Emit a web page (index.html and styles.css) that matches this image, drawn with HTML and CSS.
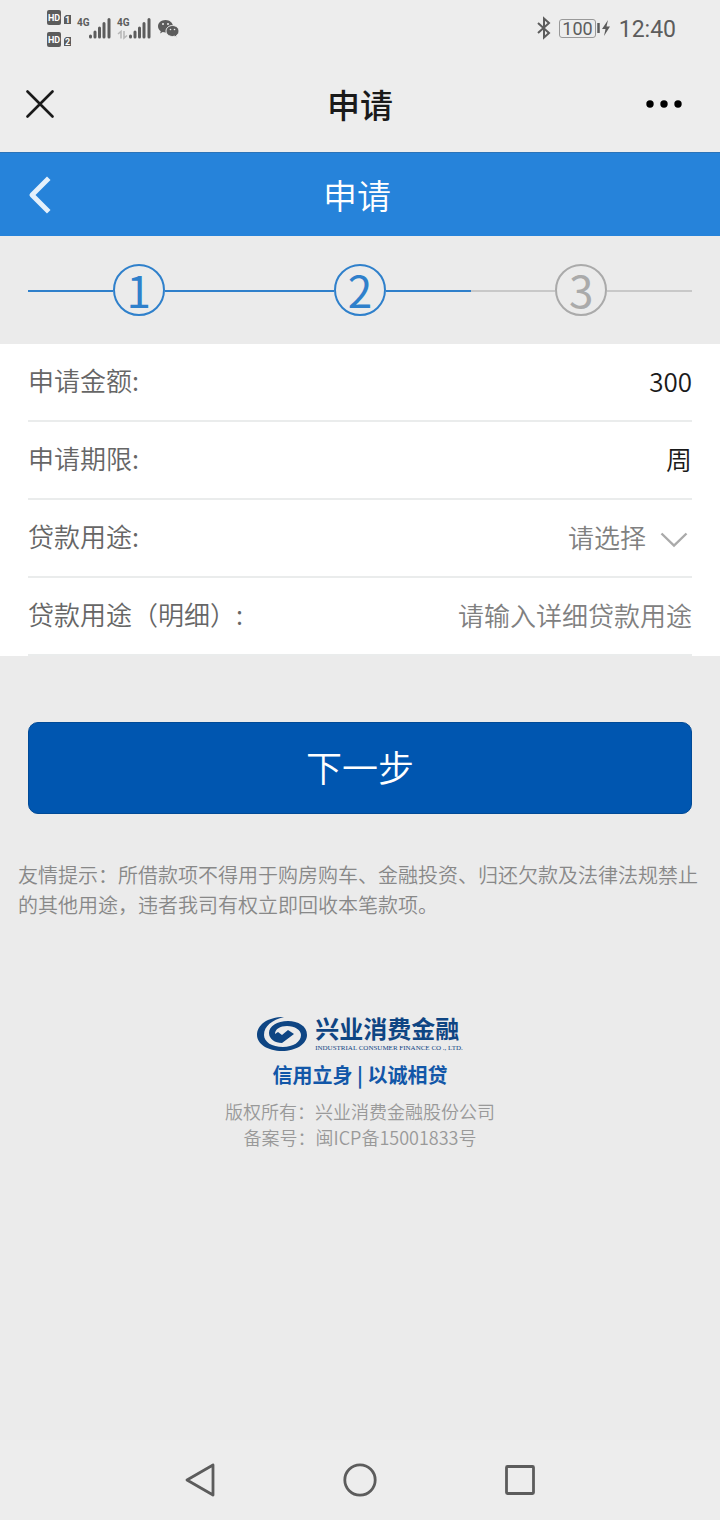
FILE: index.html
```html
<!DOCTYPE html>
<html lang="zh-CN">
<head>
<meta charset="utf-8">
<meta name="viewport" content="width=device-width, initial-scale=1">
<title>申请</title>
<link rel="stylesheet" href="styles.css">
</head>
<body>
<div class="statusbar">
  <div class="status-group">
    <svg class="icon" width="136" height="40" viewBox="0 -1 136 40" role="img" aria-label="信号">
      <g fill="#5c5c5c">
        <rect x="1" y="1" width="14" height="15" rx="2"/>
        <path d="M20 6h5v9h-7V8z"/>
        <rect x="1" y="23" width="14" height="15" rx="2"/>
        <path d="M20 28h5v9h-7v-7z"/>
      </g>
      <g class="hd-text">
        <text x="2" y="12">HD</text>
        <text x="19" y="14">1</text>
        <text x="2" y="34">HD</text>
        <text x="19" y="36">2</text>
      </g>
      <g class="net-text">
        <text x="31" y="17">4G</text>
        <text x="71" y="17">4G</text>
      </g>
      <g stroke="#5c5c5c" stroke-width="3" stroke-linecap="round">
        <path d="M44.500 27v1M49 23v5M53.500 19v9M58 14.500v13.500M63 10.500v17.500"/>
        <path d="M84.500 27v1M89 23v5M93.500 19v9M98 14.500v13.500M103 10.500v17.500"/>
      </g>
      <path d="M72 25l3-2.500v7M78 22v7l3-2.500" fill="none" stroke="#b8b8b8" stroke-width="1.600"/>
      <g fill="#5c5c5c">
        <path d="M119.500 11c-4.200 0-7.500 2.800-7.500 6.300 0 2 1 3.700 2.800 4.900l-.7 2.200 2.600-1.300 2.800.5c6 0 7.500-3 7.500-6.300s-3.300-6.300-7.500-6.300z"/>
        <path d="M126.500 16.500c-3.700 0-6.500 2.500-6.500 5.500s2.800 5.500 6.500 5.500l2.200-.3 2.300 1.200-.5-2c1.600-1 2.500-2.600 2.500-4.400 0-3-2.800-5.500-6.500-5.500z" stroke="#ededed" stroke-width="1"/>
      </g>
      <g fill="#ededed"><circle cx="117" cy="15" r="1"/><circle cx="122" cy="15" r="1"/><circle cx="124.500" cy="20.500" r=".8"/><circle cx="128.500" cy="20.500" r=".8"/></g>
    </svg>
  </div>
  <div class="status-group">
    <svg class="icon" width="16" height="24" viewBox="0 0 16 24" role="img" aria-label="蓝牙"><path d="M3 7l11 10-5 4.500V2.500L14 7 3 17" fill="none" stroke="#5c5c5c" stroke-width="2"/></svg>
    <span class="battery"><span class="battery-level">100</span><svg class="icon" width="14" height="20" viewBox="0 0 14 20" aria-hidden="true"><path d="M1.500 5v10" stroke="#5c5c5c" stroke-width="2.500"/><path d="M11 2L5 11h3.500L7 18l6-9.500H9.500z" fill="#5c5c5c"/></svg></span>
    <span class="clock">12:40</span>
  </div>
</div>

<header class="titlebar">
  <button class="bar-button" type="button" aria-label="关闭"><svg class="icon" width="28" height="28" viewBox="0 0 28 28"><path d="M1.500 1.500l25 25M26.500 1.500l-25 25" stroke="#1a1a1a" stroke-width="2.600" stroke-linecap="round"/></svg></button>
  <h1 class="window-title">申请</h1>
  <button class="bar-button bar-button-end" type="button" aria-label="更多"><svg class="icon" width="36" height="8" viewBox="0 0 36 8"><circle cx="4" cy="4" r="3.700"/><circle cx="18" cy="4" r="3.700"/><circle cx="32" cy="4" r="3.700"/></svg></button>
</header>

<nav class="pagebar">
  <button class="bar-button" type="button" aria-label="返回"><svg class="icon" width="24" height="38" viewBox="0 0 24 38"><path d="M19 4L4 19l15 15" fill="none" stroke="#e4f0fb" stroke-width="5" stroke-linecap="square" stroke-linejoin="round"/></svg></button>
  <h2 class="page-title">申请</h2>
</nav>

<main>
  <ol class="steps">
    <li class="step step-done"><span class="step-number">1</span></li>
    <li class="step step-done"><span class="step-number">2</span></li>
    <li class="step"><span class="step-number">3</span></li>
  </ol>

  <form id="apply" class="form">
    <div class="row"><label class="label" for="amount">申请金额:</label><input class="field" id="amount" type="text" value="300" readonly></div>
    <div class="row"><label class="label" for="term">申请期限:</label><input class="field" id="term" type="text" value="周" readonly></div>
    <div class="row"><label class="label" for="purpose">贷款用途:</label>
      <div class="select-wrap">
        <select class="field select" id="purpose"><option>请选择</option></select>
        <svg class="chevron" width="28" height="16" viewBox="0 0 28 16" aria-hidden="true"><path d="M1.500 1.500L14 13.500l12.500-12" fill="none" stroke="#aaa" stroke-width="2.400"/></svg>
      </div>
    </div>
    <div class="row"><label class="label" for="detail">贷款用途（明细）:</label><input class="field" id="detail" type="text" placeholder="请输入详细贷款用途"></div>
  </form>

  <div class="actions"><button class="submit" type="submit" form="apply">下一步</button></div>
  <p class="notice">友情提示：所借款项不得用于购房购车、金融投资、归还欠款及法律法规禁止的其他用途，违者我司有权立即回收本笔款项。</p>
</main>

<footer class="footer">
  <div class="brand">
    <svg class="icon" width="50" height="34" viewBox="0 0 50 34" aria-hidden="true">
      <path d="M27 0C10 0 0 8 0 18c0 9 11 16 25 16s25-7 25-16C50 9 41 4 31 4 20 4 12 9 12 16c0 6 6 10 13 10l12-9-6-4-6 5-4-3-3 2c0-5 5-8 12-8 8 0 14 4 14 9 0 7-8 12-18 12C15 30 7 25 7 18 7 9 15 3 27 0z" fill="#0e4583"/>
    </svg>
    <div class="brand-text">
      <span class="brand-name">兴业消费金融</span>
      <span class="brand-latin">INDUSTRIAL CONSUMER FINANCE CO ., LTD.</span>
    </div>
  </div>
  <p class="slogan">信用立身 | 以诚相贷</p>
  <p class="legal">版权所有：兴业消费金融股份公司<br>备案号：闽ICP备15001833号</p>
</footer>

<nav class="navbar" aria-label="系统导航">
  <button class="nav-button" type="button" aria-label="返回"><svg class="icon" width="36" height="36" viewBox="0 0 36 36"><path d="M31 3L5 18l26 15z"/></svg></button>
  <button class="nav-button" type="button" aria-label="主屏幕"><svg class="icon" width="36" height="36" viewBox="0 0 36 36"><circle cx="18" cy="18" r="15.200"/></svg></button>
  <button class="nav-button" type="button" aria-label="最近任务"><svg class="icon" width="36" height="36" viewBox="0 0 36 36"><rect x="4.500" y="4.500" width="27" height="27" rx="1"/></svg></button>
</nav>
</body>
</html>
```
FILE: styles.css
```css
* { box-sizing: border-box; }

body {
  margin: 0;
  min-height: 100vh;
  display: flex;
  flex-direction: column;
  background: #ebebeb;
  color: #1a1a1a;
  font-family: "Noto Sans CJK SC", sans-serif;
  font-weight: 350;
}

h1, h2, p, ol { margin: 0; padding: 0; }

button {
  padding: 0;
  border: 0;
  background: none;
  font-family: inherit;
  font-weight: inherit;
  cursor: pointer;
}

.icon { display: block; flex: none; }

.statusbar {
  height: 56px;
  padding: 0 44px 0 46px;
  display: flex;
  align-items: center;
  justify-content: space-between;
  background: #ededed;
  color: #5c5c5c;
  font-family: Roboto, sans-serif;
  font-weight: 400;
}

.status-group { display: flex; align-items: center; gap: 8px; }
.hd-text { fill: #fff; font: bold 9px Roboto, sans-serif; }
.net-text { fill: #5c5c5c; font: bold 10px Roboto, sans-serif; }
.battery { display: flex; align-items: center; gap: 1px; }

.battery-level {
  padding: 0 2px;
  border: 1px solid #999;
  border-radius: 3px;
  font-size: 18px;
  line-height: 17px;
}

.clock { padding-top: 3px; font-size: 23px; line-height: 28px; }

.titlebar, .pagebar {
  display: grid;
  grid-template-columns: 1fr auto 1fr;
  align-items: center;
}

.titlebar { height: 96px; padding: 0 26px; background: #ededed; }

.pagebar {
  height: 84px;
  padding: 0 34px 0 28px;
  border-top: 1px solid #2b73b8;
  background: #2683da;
}

.bar-button { justify-self: start; }
.bar-button-end { justify-self: end; padding-right: 12px; }
.window-title { font-size: 33px; line-height: 48px; font-weight: 500; }
.page-title { color: #fff; font-size: 34px; line-height: 48px; font-weight: 350; }

.steps {
  display: grid;
  grid-template-columns: repeat(3, 1fr);
  padding: 28px;
  list-style: none;
}

.step { display: flex; align-items: center; color: #aaa; }

.step::before, .step::after {
  content: "";
  flex: 1;
  height: 2px;
  margin-top: 2px;
  background: #c8c8c8;
}

.step-done { color: #2f80cb; }
.step-done::before, .step-done::after { background: #2f80cb; }

.step-number {
  width: 52px;
  height: 52px;
  border: 2px solid currentColor;
  border-radius: 50%;
  font-size: 44px;
  font-weight: 400;
  line-height: 46px;
  text-align: center;
}

.form { padding: 0 28px; background: #fff; }

.row {
  height: 78px;
  display: flex;
  align-items: center;
  justify-content: space-between;
  border-bottom: 2px solid #eaecec;
}

.label { color: #666; font-size: 26px; line-height: 40px; padding-bottom: 4px; }

.field {
  flex: 1;
  min-width: 0;
  height: 76px;
  padding: 0 0 4px;
  border: 0;
  outline: 0;
  background: none;
  color: #1a1a1a;
  font-family: inherit;
  font-size: 26px;
  font-weight: inherit;
  text-align: right;
}

.field::placeholder { color: #808080; opacity: 1; }
.select-wrap { flex: 1; display: grid; align-items: center; }

.select {
  grid-area: 1 / 1;
  padding-right: 46px;
  color: #808080;
  appearance: none;
  text-align-last: right;
}

.chevron { grid-area: 1 / 1; justify-self: end; margin: 4px 4px 0 0; pointer-events: none; }
.actions { padding: 66px 28px 0; }

.submit {
  width: 100%;
  height: 92px;
  padding-bottom: 4px;
  border: 1px solid #004a97;
  border-radius: 10px;
  background: #0056b0;
  color: #fff;
  font-size: 36px;
}

.notice {
  padding: 46px 18px 0;
  color: #888;
  font-size: 20px;
  line-height: 30px;
}

.footer {
  padding-top: 96px;
  display: flex;
  flex-direction: column;
  align-items: center;
  text-align: center;
}

.brand { display: flex; align-items: center; gap: 8px; color: #0e4583; }
.brand-text { display: flex; flex-direction: column; align-items: flex-start; gap: 4px; }
.brand-name { font-size: 24px; line-height: 24px; font-weight: 700; }
.brand-latin { font-family: "Liberation Serif", serif; font-size: 7px; line-height: 8px; white-space: nowrap; }
.slogan { margin-top: 8px; color: #1257a8; font-size: 20px; line-height: 30px; font-weight: 700; }
.legal { margin-top: 8px; color: #999; font-size: 18px; line-height: 26px; }

.navbar {
  height: 80px;
  margin-top: auto;
  display: flex;
  align-items: center;
  justify-content: center;
  gap: 124px;
  background: #ededed;
}

.nav-button .icon { fill: none; stroke: #5c5c5c; stroke-width: 2.8; stroke-linejoin: round; }
```
